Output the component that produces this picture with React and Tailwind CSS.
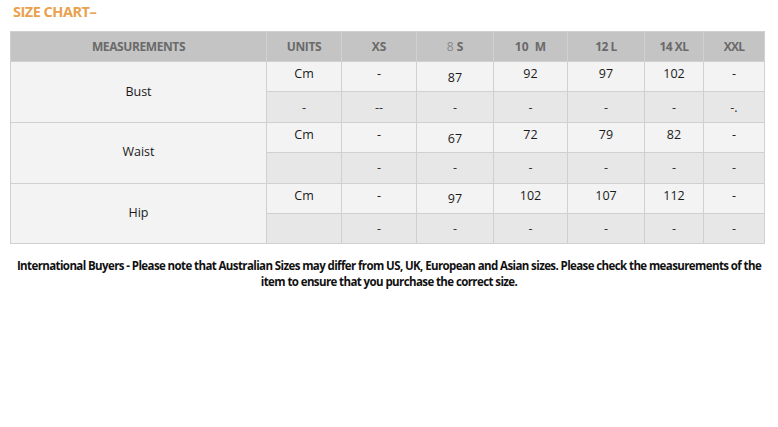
const sizes = ["XS", "8 S", "10 M", "12 L", "14 XL", "XXL"];

const rows = [
  {
    name: "Bust",
    cm: ["-", "87", "92", "97", "102", "-"],
    second: ["-", "--", "-", "-", "-", "-", "-."],
  },
  {
    name: "Waist",
    cm: ["-", "67", "72", "79", "82", "-"],
    second: ["", "-", "-", "-", "-", "-", "-"],
  },
  {
    name: "Hip",
    cm: ["-", "97", "102", "107", "112", "-"],
    second: ["", "-", "-", "-", "-", "-", "-"],
  },
];

function HeaderCell({ children, className = "" }) {
  return (
    <th
      className={`h-[30px] border border-[#d0d0d0] text-center align-middle text-[12px] font-bold text-[#6a6a6a] ${className}`}
    >
      {children}
    </th>
  );
}

export default function App() {
  return (
    <div
      className="h-[427px] w-[778px] bg-white"
      style={{ fontFamily: '"Open Sans", "Noto Sans", sans-serif' }}
    >
      {/* title */}
      <div className="px-[13px] pt-[3px] text-[14.5px] font-bold leading-[18px] tracking-[-0.5px] text-[#e9a24e]">
        SIZE CHART–
      </div>

      {/* size table */}
      <table className="ml-[10px] mt-[10px] w-[754px] table-fixed border-collapse">
        <colgroup>
          <col className="w-[256px]" />
          <col className="w-[75px]" />
          <col className="w-[75px]" />
          <col className="w-[77px]" />
          <col className="w-[74px]" />
          <col className="w-[77px]" />
          <col className="w-[59px]" />
          <col className="w-[61px]" />
        </colgroup>
        <thead className="bg-[#c4c4c4]">
          <tr>
            <HeaderCell className="tracking-[-0.4px]">MEASUREMENTS</HeaderCell>
            <HeaderCell className="tracking-[-0.4px]">UNITS</HeaderCell>
            <HeaderCell>XS</HeaderCell>
            <HeaderCell>
              <span className="font-normal text-[#8a8a8a]">8</span> S
            </HeaderCell>
            <HeaderCell>10&nbsp; M</HeaderCell>
            <HeaderCell className="tracking-[-0.5px]">12 L</HeaderCell>
            <HeaderCell className="tracking-[-0.5px]">14 XL</HeaderCell>
            <HeaderCell className="tracking-[-0.8px]">XXL</HeaderCell>
          </tr>
        </thead>
        <tbody className="text-[12.5px] text-[#1a1a1a]">
          {rows.map((row) => (
            <>
              <tr key={row.name + "-cm"} className="h-[30.4px] bg-[#f3f3f3]">
                <td
                  rowSpan={2}
                  className="border border-[#d0d0d0] bg-[#f3f3f3] text-center align-middle"
                >
                  {row.name}
                </td>
                <td className="border border-[#d0d0d0] pb-[4px] text-center">Cm</td>
                {row.cm.map((v, i) => (
                  <td
                    key={i}
                    className={`border border-[#d0d0d0] text-center ${i === 1 ? "pt-[3px]" : "pb-[4px]"}`}
                  >
                    {v}
                  </td>
                ))}
              </tr>
              <tr key={row.name + "-x"} className="h-[30.4px] bg-[#e7e7e7]">
                {row.second.map((v, i) => (
                  <td
                    key={i}
                    className="border border-[#d0d0d0] pt-[2px] text-center text-[#333]"
                  >
                    {v}
                  </td>
                ))}
              </tr>
            </>
          ))}
        </tbody>
      </table>

      {/* note */}
      <p className="mx-auto mt-[14px] w-[768px] text-center text-[11.5px] font-bold leading-[16px] tracking-[-0.6px] text-[#111]">
        International Buyers - Please note that Australian Sizes may differ from US, UK, European and Asian sizes. Please check the measurements of the item to ensure that you purchase the correct size.
      </p>
    </div>
  );
}
